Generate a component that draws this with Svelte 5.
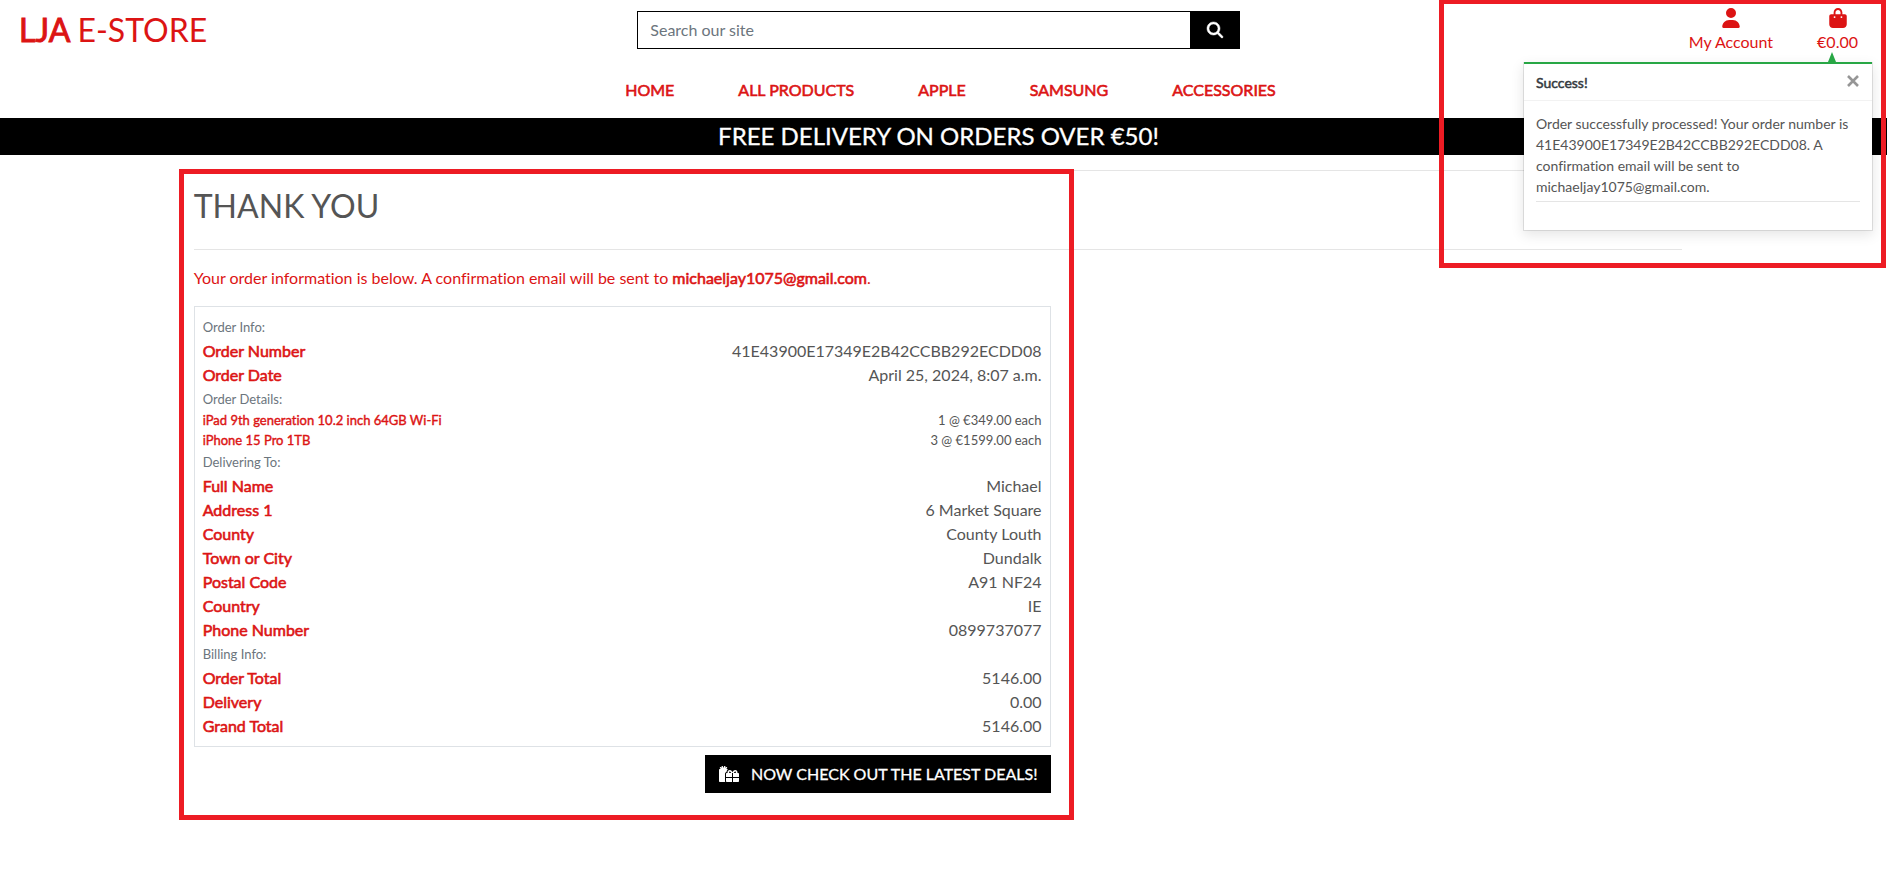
<script>
  const email = 'michaeljay1075@gmail.com';
  const orderNumber = '41E43900E17349E2B42CCBB292ECDD08';
  const links = ['Home', 'All Products', 'Apple', 'Samsung', 'Accessories'];
  const groups = [
    { title: 'Order Info:', rows: [['Order Number', orderNumber], ['Order Date', 'April 25, 2024, 8:07 a.m.']] },
    {
      title: 'Order Details:',
      small: true,
      rows: [['iPad 9th generation 10.2 inch 64GB Wi-Fi', '1 @ €349.00 each'], ['iPhone 15 Pro 1TB', '3 @ €1599.00 each']]
    },
    {
      title: 'Delivering To:',
      rows: [
        ['Full Name', 'Michael'],
        ['Address 1', '6 Market Square'],
        ['County', 'County Louth'],
        ['Town or City', 'Dundalk'],
        ['Postal Code', 'A91 NF24'],
        ['Country', 'IE'],
        ['Phone Number', '0899737077']
      ]
    },
    { title: 'Billing Info:', rows: [['Order Total', '5146.00'], ['Delivery', '0.00'], ['Grand Total', '5146.00']] }
  ];
</script>

<div class="page">
  <header>
    <div class="top">
      <a class="logo" href="#home"><strong>LJA</strong> E-STORE</a>
      <form class="search" role="search">
        <input type="search" placeholder="Search our site" aria-label="Search our site" />
        <button type="button" aria-label="Search">
          <svg viewBox="0 0 512 512" width="16" height="16"><path fill="currentColor" stroke="currentColor" stroke-width="16" d="M416 208c0 45.9-14.9 88.3-40 122.7L502.6 457.4c12.5 12.5 12.5 32.8 0 45.3s-32.8 12.5-45.3 0L330.7 376c-34.4 25.2-76.8 40-122.7 40C93.1 416 0 322.9 0 208S93.1 0 208 0S416 93.1 416 208zM208 352a144 144 0 1 0 0-288 144 144 0 1 0 0 288z" /></svg>
        </button>
      </form>
      <div class="account">
        <a href="#account">
          <svg viewBox="0 0 448 512" width="18" height="20"><path fill="currentColor" d="M224 256A128 128 0 1 0 224 0a128 128 0 1 0 0 256zm-45.7 48C79.8 304 0 383.8 0 482.3C0 498.7 13.3 512 29.7 512H418.3c16.4 0 29.7-13.3 29.7-29.7C448 383.8 368.2 304 269.7 304H178.3z" /></svg>
          <span>My Account</span>
        </a>
        <a href="#bag">
          <svg viewBox="0 0 448 512" width="18" height="20"><path fill="currentColor" d="M160 112c0-35.3 28.7-64 64-64s64 28.7 64 64v48H160V112zm-48 48H48c-26.5 0-48 21.5-48 48V416c0 53 43 96 96 96H352c53 0 96-43 96-96V208c0-26.5-21.5-48-48-48H336V112C336 50.1 285.9 0 224 0S112 50.1 112 112v48zm24 48a24 24 0 1 1 0 48 24 24 0 1 1 0-48zm152 24a24 24 0 1 1 48 0 24 24 0 1 1 -48 0z" /></svg>
          <span>€0.00</span>
        </a>
      </div>
    </div>
    <nav>
      {#each links as link}
        <a href="#{link}">{link}</a>
      {/each}
    </nav>
    <div class="banner">FREE DELIVERY ON ORDERS OVER €50!</div>
  </header>

  <main>
    <hr />
    <h1>THANK YOU</h1>
    <hr />
    <section class="order">
      <p class="lead">Your order information is below. A confirmation email will be sent to <strong>{email}</strong>.</p>
      <div class="details">
        {#each groups as group}
          <h2>{group.title}</h2>
          <dl class:small={group.small}>
            {#each group.rows as [label, value]}
              <div><dt>{label}</dt><dd>{value}</dd></div>
            {/each}
          </dl>
        {/each}
      </div>
      <a class="deals" href="#deals">
        <svg viewBox="0 0 640 512" width="20" height="16"><path fill="currentColor" d="M240.6 194.1c1.9-30.8 17.3-61.2 44-79.8C279.4 103.5 268.7 96 256 96h-29.4l30.7-22c7.2-5.1 8.9-15.1 3.7-22.3l-9.3-13c-5.1-7.2-15.1-8.9-22.3-3.7l-32 22.9 11.5-30.6c3.1-8.3-1.1-17.5-9.4-20.6l-15-5.6c-8.3-3.1-17.5 1.1-20.6 9.4l-19.9 53-19.9-53.1C121 2.1 111.8-2.1 103.5 1l-15 5.6C80.2 9.7 76 19 79.2 27.2l11.5 30.6L58.6 35c-7.2-5.1-17.2-3.5-22.3 3.7l-9.3 13c-5.1 7.2-3.5 17.2 3.7 22.3l30.7 22H32c-17.7 0-32 14.3-32 32v352c0 17.7 14.3 32 32 32h168.9c-5.5-9.5-8.9-20.3-8.9-32V256c0-29.9 20.8-55 48.6-61.9zM224 480c0 17.7 14.3 32 32 32h160V384H224v96zm224 32h160c17.7 0 32-14.3 32-32v-96H448v128zm160-288h-20.4c2.6-7.6 4.4-15.5 4.4-23.8 0-35.5-27-72.2-72.1-72.2-48.1 0-75.9 47.7-87.9 75.3-12.1-27.6-39.9-75.3-87.9-75.3-45.1 0-72.1 36.7-72.1 72.2 0 8.3 1.7 16.2 4.4 23.8H256c-17.7 0-32 14.3-32 32v96h192V224h15.3l.7-.2.7.2H448v128h192v-96c0-17.7-14.3-32-32-32zm-272 0c-2.7-1.4-5.1-3-7.2-4.8-7.3-6.4-8.8-13.8-8.8-19 0-9.7 6.4-24.2 24.1-24.2 18.7 0 35.6 27.4 44.5 48H336zm199.2-4.8c-2.1 1.8-4.5 3.4-7.2 4.8h-52.6c8.8-20.3 25.8-48 44.5-48 17.7 0 24.1 14.5 24.1 24.2 0 5.2-1.5 12.6-8.8 19z" /></svg>
        <span>NOW CHECK OUT THE LATEST DEALS!</span>
      </a>
    </section>
    <div class="mark mark-order"></div>
  </main>

  <div class="toast" role="status">
    <div class="arrow"></div>
    <div class="toast-head">
      <strong>Success!</strong>
      <button type="button" aria-label="Close">
        <svg viewBox="0 0 12 12" width="12" height="12"><path d="M1 1l10 10M11 1L1 11" stroke="currentColor" stroke-width="2.6" /></svg>
      </button>
    </div>
    <div class="toast-body">
      <p>Order successfully processed! Your order number is {orderNumber}. A confirmation email will be sent to {email}.</p>
      <hr />
    </div>
  </div>
  <div class="mark mark-toast"></div>
</div>

<style>
  :global(body) {
    margin: 0;
    background: #fff;
    overflow-x: hidden;
  }
  .page,
  .page * {
    box-sizing: border-box;
  }
  .page {
    position: relative;
    margin-left: -10px;
    font: 400 16px/24px Lato, sans-serif;
    font-variant-ligatures: no-common-ligatures;
    color: #555;
  }
  a {
    color: #dc1414;
    text-decoration: none;
  }
  svg {
    display: block;
    overflow: visible;
  }
  strong,
  dt,
  nav a {
    font-weight: 400;
    -webkit-text-stroke: 0.6px currentColor;
  }
  hr {
    width: 100%;
    margin: 0;
    border: 0;
    border-top: 1px solid rgba(0, 0, 0, 0.1);
  }
  .top {
    display: grid;
    grid-template-columns: repeat(3, 1fr);
    height: 61px;
  }
  .logo {
    padding: 10px 0 0 29px;
    font-size: 32px;
    line-height: 40px;
  }
  .logo strong {
    -webkit-text-stroke-width: 1px;
  }
  .search {
    display: flex;
    height: 38px;
    margin: 11px 15px 0;
  }
  .search input {
    flex: 1;
    min-width: 0;
    padding: 0 12px;
    border: 1px solid #000;
    border-radius: 0;
    background: #fff;
    font: inherit;
    color: #555;
    outline: none;
    appearance: none;
  }
  .search input::placeholder {
    color: #6c757d;
  }
  .search button {
    display: grid;
    place-items: center;
    width: 49px;
    padding: 0;
    border: 0;
    background: #000;
    color: #fff;
  }
  .account {
    display: flex;
    justify-content: flex-end;
    gap: 44px;
    padding: 8px 29px 0 0;
  }
  .account a {
    display: flex;
    flex-direction: column;
    align-items: center;
    gap: 2px;
  }
  nav {
    display: flex;
    justify-content: center;
    gap: 64px;
    padding: 17px 0 16px 24px;
  }
  nav a {
    text-transform: uppercase;
  }
  .banner {
    padding: 3px 0 5px;
    background: #000;
    color: #fff;
    font-size: 24px;
    line-height: 29px;
    text-align: center;
    -webkit-text-stroke: 0.3px currentColor;
  }
  main {
    position: relative;
    width: 80%;
    margin: 0 auto;
    padding: 15px 15px 90px 14px;
  }
  h1 {
    margin: 16px 0 24px;
    font-size: 32px;
    font-weight: 400;
    line-height: 38px;
  }
  .order {
    display: flex;
    flex-direction: column;
    width: calc((100% + 30px) * 7 / 12 - 29px);
  }
  .lead {
    margin: 16px 0;
    color: #dc1414;
  }
  .details {
    padding: 8px 8px;
    border: 1px solid #dee2e6;
  }
  h2 {
    margin: 0;
    font-size: 13px;
    font-weight: 400;
    line-height: 24px;
    color: #6c757d;
  }
  dl,
  dd {
    margin: 0;
  }
  dl div {
    display: flex;
    justify-content: space-between;
  }
  dt {
    color: #dc1414;
  }
  .small {
    font-size: 13px;
    line-height: 1.5;
  }
  .small dt {
    -webkit-text-stroke-width: 0.4px;
  }
  .deals {
    display: flex;
    align-items: center;
    align-self: flex-end;
    gap: 12px;
    height: 38px;
    margin-top: 8px;
    padding: 0 13px 0 14px;
    background: #000;
    color: #fff;
    -webkit-text-stroke: 0.3px currentColor;
  }
  .toast {
    position: absolute;
    top: 62px;
    right: 14px;
    width: 350px;
    border: 1px solid rgba(0, 0, 0, 0.1);
    border-top: 0;
    background: #fff;
    background-clip: padding-box;
    box-shadow: 0 4px 12px rgba(0, 0, 0, 0.1);
    font-size: 14px;
    line-height: 21px;
  }
  .arrow {
    position: absolute;
    top: -10px;
    right: 36px;
    border: 4px solid transparent;
    border-top: 0;
    border-bottom: 10px solid #28a745;
  }
  .toast-head {
    display: flex;
    align-items: center;
    justify-content: space-between;
    height: 39px;
    padding: 0 12px;
    border-top: 2px solid #28a745;
    border-bottom: 1px solid rgba(0, 0, 0, 0.05);
    color: #343a40;
  }
  .toast-head strong {
    -webkit-text-stroke-width: 0.5px;
  }
  .toast-head button {
    padding: 0 1px 2px;
    border: 0;
    background: none;
    color: #969696;
  }
  .toast-body {
    padding: 12px 12px 28px;
  }
  .toast-body p {
    margin: 0;
    padding-bottom: 4px;
  }
  .mark {
    position: absolute;
    border: 5px solid #ed1c24;
    pointer-events: none;
  }
  .mark-order {
    top: 14px;
    left: -1px;
    width: calc(100% * 7 / 12 + 10px);
    height: 651px;
  }
  .mark-toast {
    top: -1px;
    right: 1px;
    width: 447px;
    height: 269px;
  }
</style>
